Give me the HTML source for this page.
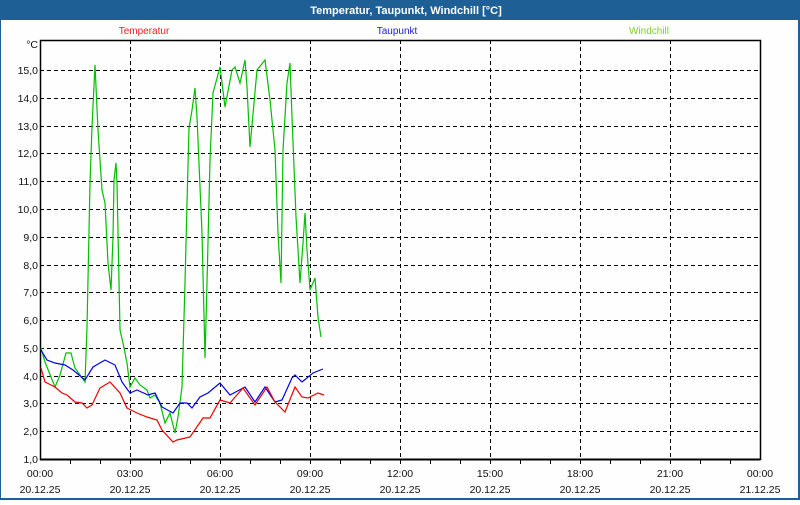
<!DOCTYPE html>
<html><head><meta charset="utf-8"><style>
body{margin:0;width:800px;height:500px;overflow:hidden;background:#fff;font-family:"Liberation Sans",sans-serif}
</style></head><body>
<svg width="800" height="500" xmlns="http://www.w3.org/2000/svg" font-family="Liberation Sans, sans-serif" font-size="10.5">
<rect x="0" y="0" width="800" height="500" fill="#1e5f96"/>
<rect x="1" y="20" width="797" height="478" fill="#fdfefd"/>
<text x="406" y="14" fill="#fff" font-weight="bold" font-size="11" text-anchor="middle">Temperatur, Taupunkt, Windchill [°C]</text>
<text x="144" y="34" fill="#f02020" font-size="10" text-anchor="middle">Temperatur</text>
<text x="397" y="34" fill="#2020d0" font-size="10" text-anchor="middle">Taupunkt</text>
<text x="649" y="34" fill="#80d020" font-size="10" text-anchor="middle">Windchill</text>
<g stroke="#000" stroke-dasharray="4,3" stroke-width="1">
<line x1="40" x2="760" y1="70.5" y2="70.5"/><line x1="40" x2="760" y1="98.5" y2="98.5"/><line x1="40" x2="760" y1="126.5" y2="126.5"/><line x1="40" x2="760" y1="153.5" y2="153.5"/><line x1="40" x2="760" y1="181.5" y2="181.5"/><line x1="40" x2="760" y1="209.5" y2="209.5"/><line x1="40" x2="760" y1="237.5" y2="237.5"/><line x1="40" x2="760" y1="265.5" y2="265.5"/><line x1="40" x2="760" y1="292.5" y2="292.5"/><line x1="40" x2="760" y1="320.5" y2="320.5"/><line x1="40" x2="760" y1="348.5" y2="348.5"/><line x1="40" x2="760" y1="376.5" y2="376.5"/><line x1="40" x2="760" y1="403.5" y2="403.5"/><line x1="40" x2="760" y1="431.5" y2="431.5"/>
<line x1="130.5" x2="130.5" y1="40" y2="460"/><line x1="220.5" x2="220.5" y1="40" y2="460"/><line x1="310.5" x2="310.5" y1="40" y2="460"/><line x1="400.5" x2="400.5" y1="40" y2="460"/><line x1="490.5" x2="490.5" y1="40" y2="460"/><line x1="580.5" x2="580.5" y1="40" y2="460"/><line x1="670.5" x2="670.5" y1="40" y2="460"/>
</g>
<rect x="40.5" y="40.5" width="720" height="419" fill="none" stroke="#000" stroke-width="1.5"/>
<line x1="40" x2="760" y1="459.5" y2="459.5" stroke="#000" stroke-width="2"/>
<g stroke="#000">
<line x1="70.5" x2="70.5" y1="459" y2="464"/><line x1="100.5" x2="100.5" y1="459" y2="464"/><line x1="130.5" x2="130.5" y1="459" y2="464"/><line x1="160.5" x2="160.5" y1="459" y2="464"/><line x1="190.5" x2="190.5" y1="459" y2="464"/><line x1="220.5" x2="220.5" y1="459" y2="464"/><line x1="250.5" x2="250.5" y1="459" y2="464"/><line x1="280.5" x2="280.5" y1="459" y2="464"/><line x1="310.5" x2="310.5" y1="459" y2="464"/><line x1="340.5" x2="340.5" y1="459" y2="464"/><line x1="370.5" x2="370.5" y1="459" y2="464"/><line x1="400.5" x2="400.5" y1="459" y2="464"/><line x1="430.5" x2="430.5" y1="459" y2="464"/><line x1="460.5" x2="460.5" y1="459" y2="464"/><line x1="490.5" x2="490.5" y1="459" y2="464"/><line x1="520.5" x2="520.5" y1="459" y2="464"/><line x1="550.5" x2="550.5" y1="459" y2="464"/><line x1="580.5" x2="580.5" y1="459" y2="464"/><line x1="610.5" x2="610.5" y1="459" y2="464"/><line x1="640.5" x2="640.5" y1="459" y2="464"/><line x1="670.5" x2="670.5" y1="459" y2="464"/><line x1="700.5" x2="700.5" y1="459" y2="464"/><line x1="730.5" x2="730.5" y1="459" y2="464"/>
</g>
<g fill="#111" text-anchor="end">
<text x="38" y="48">°C</text>
<text x="38" y="74">15,0</text><text x="38" y="102">14,0</text><text x="38" y="130">13,0</text><text x="38" y="157">12,0</text><text x="38" y="185">11,0</text><text x="38" y="213">10,0</text><text x="38" y="241">9,0</text><text x="38" y="269">8,0</text><text x="38" y="296">7,0</text><text x="38" y="324">6,0</text><text x="38" y="352">5,0</text><text x="38" y="380">4,0</text><text x="38" y="407">3,0</text><text x="38" y="435">2,0</text><text x="38" y="463">1,0</text>
</g>
<g fill="#111" text-anchor="middle">
<text x="40" y="477">00:00</text><text x="130" y="477">03:00</text><text x="220" y="477">06:00</text><text x="310" y="477">09:00</text><text x="400" y="477">12:00</text><text x="490" y="477">15:00</text><text x="580" y="477">18:00</text><text x="670" y="477">21:00</text><text x="760" y="477">00:00</text>
<text x="40" y="493">20.12.25</text><text x="130" y="493">20.12.25</text><text x="220" y="493">20.12.25</text><text x="310" y="493">20.12.25</text><text x="400" y="493">20.12.25</text><text x="490" y="493">20.12.25</text><text x="580" y="493">20.12.25</text><text x="670" y="493">20.12.25</text><text x="760" y="493">21.12.25</text>
</g>
<g fill="none" stroke-width="1.2">
<polyline stroke="#00c000" points="41,348 45,362 55,387 60,375 66,353 71,353 75,368 85,382 87,327 90,183 92,127 95,65 98,130 102,190 105,203 108,263 111,290 113,237 114,180 116,163 117,183 120,330 123,343 127,363 130,387 135,378 140,385 147,390 150,398 155,395 160,403 165,423 170,413 175,433 178,417 182,387 185,283 187,203 189,128 192,110 195,88 197,117 202,233 205,358 207,283 210,160 213,93 220,67 225,107 232,70 235,67 240,83 245,60 247,87 250,147 257,70 265,60 270,100 275,150 278,233 281,283 283,150 287,83 290,63 292,117 296,217 300,283 303,243 305,213 307,250 310,290 315,278 318,317 321,337"/>
<polyline stroke="#0000f0" points="41,350 47,360 55,363 65,365 73,370 85,380 93,367 105,360 115,365 122,382 130,393 137,390 148,395 155,393 162,407 173,413 180,403 187,403 192,408 200,397 208,393 220,383 230,395 245,387 255,402 265,387 275,402 282,400 292,378 295,375 302,382 313,373 323,369"/>
<polyline stroke="#f00000" points="41,368 45,382 55,387 62,393 67,395 75,402 82,403 87,408 92,405 100,388 110,382 120,393 127,408 137,413 147,417 157,420 162,430 173,442 177,440 190,437 203,418 210,418 220,400 230,403 243,388 255,405 267,387 275,402 285,412 295,387 302,397 308,398 318,393 324,395"/>
</g>
</svg>
</body></html>
